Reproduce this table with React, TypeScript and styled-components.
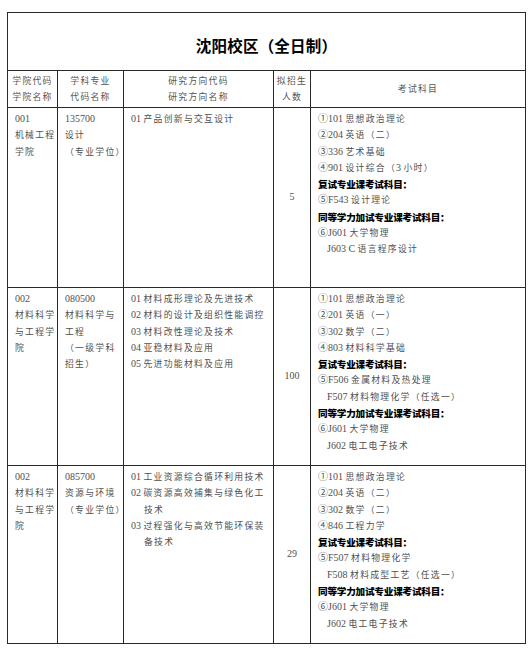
import React from 'react'
import styled, { createGlobalStyle } from 'styled-components'

const GlobalStyle = createGlobalStyle`
  html, body {
    margin: 0;
    padding: 0;
    background: #fff;
  }
`

type LineKind = 'normal' | 'bold' | 'indent' | 'hang'

interface Line {
  t: string;
  kind?: LineKind;
}

interface Row {
  college: string[];
  major: string[];
  directions: Line[];
  quota: string;
  exams: Line[];
  height: number;
}

const rows: Row[] = [
  {
    college: ['001', '机械工程', '学院'],
    major: ['135700', '设计', '（专业学位）'],
    directions: [{ t: '01 产品创新与交互设计' }],
    quota: '5',
    exams: [
      { t: '①101 思想政治理论' },
      { t: '②204 英语（二）' },
      { t: '③336 艺术基础' },
      { t: '④901 设计综合（3 小时）' },
      { t: '复试专业课考试科目：', kind: 'bold' },
      { t: '⑤F543 设计理论' },
      { t: '同等学力加试专业课考试科目：', kind: 'bold' },
      { t: '⑥J601 大学物理' },
      { t: 'J603 C 语言程序设计', kind: 'indent' },
    ],
    height: 180,
  },
  {
    college: ['002', '材料科学', '与工程学', '院'],
    major: ['080500', '材料科学与', '工程', '（一级学科', '招生）'],
    directions: [
      { t: '01 材料成形理论及先进技术' },
      { t: '02 材料的设计及组织性能调控' },
      { t: '03 材料改性理论及技术' },
      { t: '04 亚稳材料及应用' },
      { t: '05 先进功能材料及应用' },
    ],
    quota: '100',
    exams: [
      { t: '①101 思想政治理论' },
      { t: '②201 英语（一）' },
      { t: '③302 数学（二）' },
      { t: '④803 材料科学基础' },
      { t: '复试专业课考试科目：', kind: 'bold' },
      { t: '⑤F506 金属材料及热处理' },
      { t: 'F507 材料物理化学（任选一）', kind: 'indent' },
      { t: '同等学力加试专业课考试科目：', kind: 'bold' },
      { t: '⑥J601 大学物理' },
      { t: 'J602 电工电子技术', kind: 'indent' },
    ],
    height: 178,
  },
  {
    college: ['002', '材料科学', '与工程学', '院'],
    major: ['085700', '资源与环境', '（专业学位）'],
    directions: [
      { t: '01 工业资源综合循环利用技术' },
      { t: '02 碳资源高效捕集与绿色化工' },
      { t: '技术', kind: 'hang' },
      { t: '03 过程强化与高效节能环保装' },
      { t: '备技术', kind: 'hang' },
    ],
    quota: '29',
    exams: [
      { t: '①101 思想政治理论' },
      { t: '②204 英语（二）' },
      { t: '③302 数学（二）' },
      { t: '④846 工程力学' },
      { t: '复试专业课考试科目：', kind: 'bold' },
      { t: '⑤F507 材料物理化学' },
      { t: 'F508 材料成型工艺（任选一）', kind: 'indent' },
      { t: '同等学力加试专业课考试科目：', kind: 'bold' },
      { t: '⑥J601 大学物理' },
      { t: 'J602 电工电子技术', kind: 'indent' },
    ],
    height: 178,
  },
]

const Page = styled.div`
  padding: 12px 0 0 7px;
  font-family: "Liberation Serif", "Noto Sans CJK SC", serif;
`

const Table = styled.table`
  width: 518px;
  border-collapse: collapse;
  table-layout: fixed;
  border: 1.5px solid #2a2a2a;
`

const TitleCell = styled.th`
  height: 51px;
  padding: 6px 0 0;
  border: 1.5px solid #2a2a2a;
  font-family: "Noto Sans CJK SC", sans-serif;
  font-size: 15.5px;
  font-weight: 700;
  color: #000;
  text-align: center;
  vertical-align: middle;
  letter-spacing: 0.2px;
`

const HeadCell = styled.th`
  height: 36px;
  padding: 0;
  border: 1.5px solid #2a2a2a;
  font-weight: 400;
  font-size: 10px;
  line-height: 16px;
  color: #555;
  text-align: center;
  vertical-align: middle;
`

const HeadLine = styled.div`
  height: 16px;
`

const Cell = styled.td<{ $center?: boolean }>`
  padding: ${(p) => (p.$center ? '0' : '3px 0 0 7px')};
  border: 1.5px solid #2a2a2a;
  vertical-align: ${(p) => (p.$center ? 'middle' : 'top')};
  text-align: ${(p) => (p.$center ? 'center' : 'left')};
  font-size: 10px;
  line-height: 16.3px;
  color: #4f4f4f;
  white-space: nowrap;
  overflow: visible;
`

// CJK runs in the source are set small and spaced out, like the Song face of the original
const Han = styled.span`
  font-family: "Noto Sans CJK SC", sans-serif;
  font-size: 8.8px;
  letter-spacing: 1.3px;
  line-height: 1;
`

const Circled = styled.span`
  font-family: "Noto Sans CJK SC", sans-serif;
  font-size: 10px;
  line-height: 1;
`

const Text = styled.div<{ $kind: LineKind }>`
  height: 16.3px;
  padding-left: ${(p) => (p.$kind === 'indent' ? '9px' : p.$kind === 'hang' ? '13px' : '0')};
  font-weight: ${(p) => (p.$kind === 'bold' ? 900 : 400)};
  color: ${(p) => (p.$kind === 'bold' ? '#000' : 'inherit')};
  font-family: ${(p) => (p.$kind === 'bold' ? '"Noto Sans CJK SC", sans-serif' : 'inherit')};
  font-size: ${(p) => (p.$kind === 'bold' ? '9.6px' : 'inherit')};
  letter-spacing: ${(p) => (p.$kind === 'bold' ? '-0.2px' : 'inherit')};
`

const hanRe = /([\u3000-\u9fff\uff00-\uffef]+|[\u2460-\u2473])/

const Mixed = ({ s }: { s: string }) => (
  <>
    {s.split(hanRe).map((part, i) => {
      if (!part) return null
      if (/^[\u2460-\u2473]$/.test(part)) return <Circled key={i}>{part}</Circled>
      if (/^[\u3000-\u9fff\uff00-\uffef]+$/.test(part)) return <Han key={i}>{part}</Han>
      return <React.Fragment key={i}>{part}</React.Fragment>
    })}
  </>
)

const Lines = ({ items }: { items: Line[] }) => (
  <>
    {items.map((l, i) => (
      <Text key={i} $kind={l.kind || 'normal'}>
        {l.kind === 'bold' ? l.t : <Mixed s={l.t} />}
      </Text>
    ))}
  </>
)

const plain = (arr: string[]): Line[] => arr.map((t) => ({ t }))

const headers = [
  ['学院代码', '学院名称'],
  ['学科专业', '代码名称'],
  ['研究方向代码', '研究方向名称'],
  ['拟招生', '人数'],
  ['考试科目'],
]

export default function App() {
  return (
    <Page>
      <GlobalStyle />
      <Table>
        <colgroup>
          <col style={{ width: 50 }} />
          <col style={{ width: 66 }} />
          <col style={{ width: 150 }} />
          <col style={{ width: 37 }} />
          <col style={{ width: 215 }} />
        </colgroup>
        <thead>
          <tr>
            <TitleCell colSpan={5}>沈阳校区（全日制）</TitleCell>
          </tr>
          <tr>
            {headers.map((h, i) => (
              <HeadCell key={i}>
                {h.map((line, j) => (
                  <HeadLine key={j}><Han>{line}</Han></HeadLine>
                ))}
              </HeadCell>
            ))}
          </tr>
        </thead>
        <tbody>
          {rows.map((r, i) => (
            <tr key={i} style={{ height: r.height }}>
              <Cell><Lines items={plain(r.college)} /></Cell>
              <Cell><Lines items={plain(r.major)} /></Cell>
              <Cell><Lines items={r.directions} /></Cell>
              <Cell $center>{r.quota}</Cell>
              <Cell><Lines items={r.exams} /></Cell>
            </tr>
          ))}
        </tbody>
      </Table>
    </Page>
  )
}
